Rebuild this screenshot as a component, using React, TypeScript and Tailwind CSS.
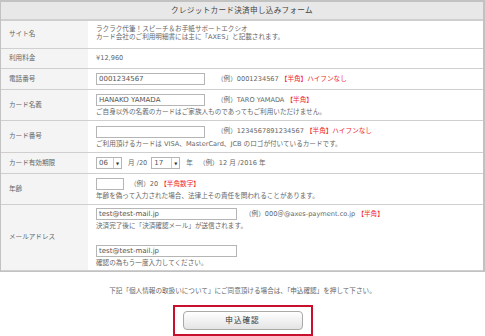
import React from 'react';

const Red = ({ children }: { children: React.ReactNode }) => (
  <span className="text-[#f0262d]">{children}</span>
);

const Field = ({ w, value = '' }: { w: string; value?: string }) => (
  <div className={`${w} h-[12px] border border-[#b5b5b5] bg-white px-[2px] flex items-center text-[7px] text-[#555] shrink-0`}>
    {value}
  </div>
);

const Select = ({ value, w }: { value: string; w: string }) => (
  <div className={`${w} h-[12px] border border-[#b5b5b5] bg-white flex items-stretch text-[7px] text-[#555] shrink-0`}>
    <div className="flex-1 flex items-center px-[2px]">{value}</div>
    <div className="w-[8px] border-l border-[#ccc] flex items-center justify-center text-[4px] text-[#333]">▼</div>
  </div>
);

const Row = ({ label, h, children, className = '' }: { label: string; h: string; children: React.ReactNode; className?: string }) => (
  <div className={`flex ${h} border-b border-[#cfcfcf]`}>
    <div className="w-[87px] shrink-0 bg-[#f4f4f4] flex items-center pl-[8px] text-[#666]">{label}</div>
    <div className={`flex-1 px-[8px] flex flex-col justify-center ${className}`}>{children}</div>
  </div>
);

export default function App() {
  return (
    <div
      className="w-[485px] h-[336px] bg-white overflow-hidden text-[6.6px] leading-[7px] text-[#666]"
      style={{ fontFamily: '"DejaVu Sans", "Noto Sans CJK JP", sans-serif' }}
    >
      <div className="border-t-2 border-r-2 border-l border-[#c2c2c2] border-b border-b-[#c2c2c2]">
        <div className="h-[19px] bg-[#e8e8e8] border-b-2 border-[#cfcfcf] flex items-center justify-center text-[7.6px] text-[#444] tracking-[0.3px]">
          クレジットカード決済申し込みフォーム
        </div>

        <Row label="サイト名" h="h-[28px]" className="gap-[1px] pb-[3px]">
          <div>ラクラク代筆！スピーチ＆お手紙サポートエクシオ</div>
          <div>カード会社のご利用明細書には主に「AXES」と記載されます。</div>
        </Row>

        <Row label="利用料金" h="h-[20px]">
          <div>¥12,960</div>
        </Row>

        <Row label="電話番号" h="h-[21px]">
          <div className="flex items-center gap-[12px]">
            <Field w="w-[109px]" value="0001234567" />
            <div>（例）0001234567 <Red>【半角】ハイフンなし</Red></div>
          </div>
        </Row>

        <Row label="カード名義" h="h-[31px]" className="gap-[3px]">
          <div className="flex items-center gap-[12px]">
            <Field w="w-[109px]" value="HANAKO YAMADA" />
            <div>（例）TARO YAMADA <Red>【半角】</Red></div>
          </div>
          <div>ご自身以外の名義のカードはご家族人ものであってもご利用いただけません。</div>
        </Row>

        <Row label="カード番号" h="h-[32px]" className="gap-[3px]">
          <div className="flex items-center gap-[12px]">
            <Field w="w-[109px]" />
            <div>（例）1234567891234567 <Red>【半角】ハイフンなし</Red></div>
          </div>
          <div>ご利用頂けるカードは VISA、MasterCard、JCB のロゴが付いているカードです。</div>
        </Row>

        <Row label="カード有効期限" h="h-[21px]">
          <div className="flex items-center">
            <Select w="w-[26px]" value="06" />
            <span className="ml-[6px] mr-[4px]">月 /20</span>
            <Select w="w-[29px]" value="17" />
            <span className="ml-[6px]">年</span>
            <span className="ml-[6px]">（例）12 月 /2016 年</span>
          </div>
        </Row>

        <Row label="年齢" h="h-[31px]" className="gap-[3px]">
          <div className="flex items-center gap-[6px]">
            <Field w="w-[28px]" />
            <div>（例）20 <Red>【半角数字】</Red></div>
          </div>
          <div>年齢を偽って入力された場合、法律上その責任を問われることがあります。</div>
        </Row>

        <Row label="メールアドレス" h="h-[66px]" className="gap-[3px]">
          <div className="flex items-center gap-[8px]">
            <Field w="w-[141px]" value="test@test-mail.jp" />
            <div>（例）000＠@axes-payment.co.jp <Red>【半角】</Red></div>
          </div>
          <div>決済完了後に「決済確認メール」が送信されます。</div>
          <div className="h-[9px]" />
          <Field w="w-[141px]" value="test@test-mail.jp" />
          <div>確認の為もう一度入力してください。</div>
        </Row>
      </div>

      <div className="mt-[16px] text-center text-[#666]">
        下記「個人情報の取扱いについて」にご同意頂ける場合は、「申込確認」を押して下さい。
      </div>

      <div className="flex justify-center mt-[10px]">
        <div className="w-[140px] h-[31px] border-2 border-[#c8102e] flex items-center justify-center">
          <button className="w-[120px] h-[19px] rounded-[4px] border border-[#a9a9a9] bg-gradient-to-b from-white to-[#e4e4e4] text-[7.6px] text-[#333] tracking-[1px]">
            申込確認
          </button>
        </div>
      </div>
    </div>
  );
}
